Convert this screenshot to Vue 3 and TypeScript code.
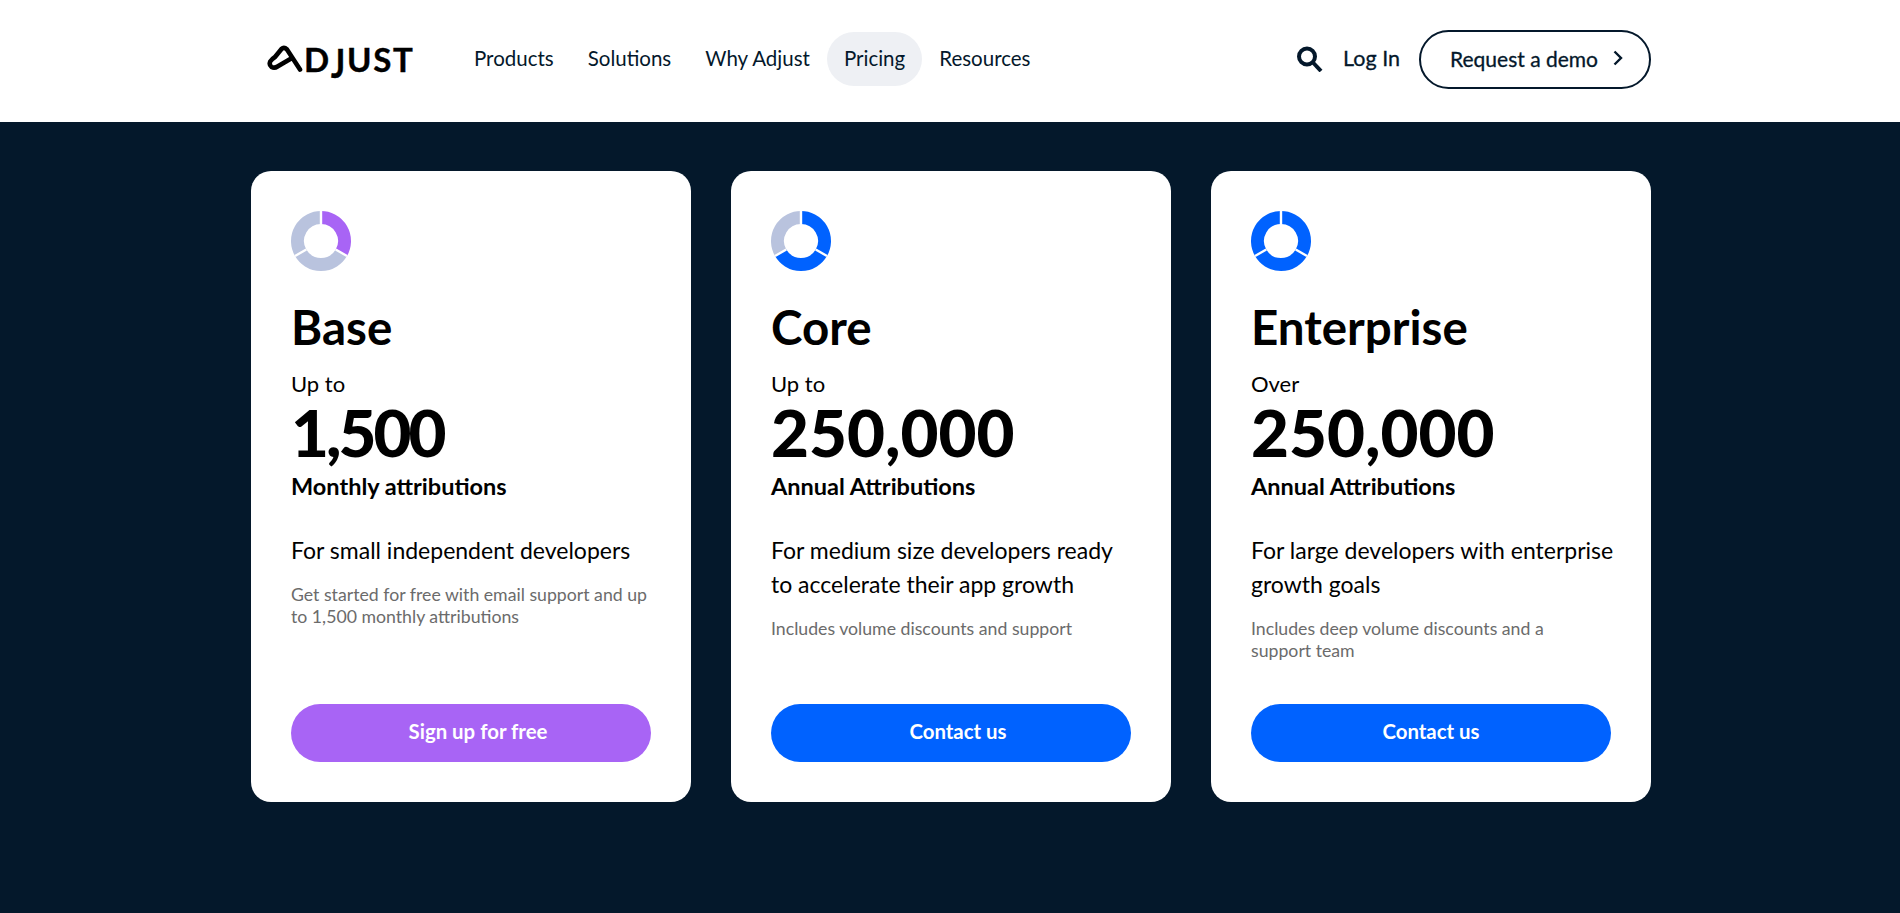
<script setup lang="ts">
interface Plan {
  name: string
  lead: string
  amount: string
  unit: string
  title: string
  note: string
  cta: string
  colors: string[]
  button: string
  centered?: boolean
  tight?: boolean
}

const navItems = ['Products', 'Solutions', 'Why Adjust', 'Pricing', 'Resources']

const blue = '#0062ff'
const purple = '#a864f5'
const grey = '#b9c3de'

const plans: Plan[] = [
  {
    name: 'Base',
    lead: 'Up to',
    amount: '1,500',
    unit: 'Monthly attributions',
    title: 'For small independent developers',
    note: 'Get started for free with email support and up to 1,500 monthly attributions',
    cta: 'Sign up for free',
    colors: [purple, grey, grey],
    button: purple,
    tight: true,
  },
  {
    name: 'Core',
    lead: 'Up to',
    amount: '250,000',
    unit: 'Annual Attributions',
    title: 'For medium size developers ready to accelerate their app growth',
    note: 'Includes volume discounts and support',
    cta: 'Contact us',
    colors: [blue, blue, grey],
    button: blue,
  },
  {
    name: 'Enterprise',
    lead: 'Over',
    amount: '250,000',
    unit: 'Annual Attributions',
    title: 'For large developers with enterprise growth goals',
    note: 'Includes deep volume discounts and a support team',
    cta: 'Contact us',
    colors: [blue, blue, blue],
    button: blue,
    centered: true,
  },
]

// one third of the donut, angles measured clockwise from 12 o'clock
function arc(index: number): string {
  const r = 23.5
  const point = (deg: number) => {
    const rad = (deg * Math.PI) / 180
    return `${(30 + r * Math.sin(rad)).toFixed(2)} ${(30 - r * Math.cos(rad)).toFixed(2)}`
  }
  return `M${point(index * 120)} A${r} ${r} 0 0 1 ${point((index + 1) * 120)}`
}
</script>

<template>
  <div class="page">
    <header class="header">
      <div class="wrap header-row">
        <a class="logo">
          <svg class="logo-a" viewBox="0 0 36 28" width="36" height="28">
            <path d="M33 24.500 L20 4.500 Q17 1.500 14.500 4 L8 12 Q5 14 3.200 16.500 Q1.800 20 4.500 22 Q7.500 23.500 10.500 21.500 L25 13" fill="none" stroke="#000" stroke-width="4.600" stroke-linecap="round" stroke-linejoin="round" />
          </svg>
          <span>D<span class="logo-j">J</span>UST</span>
        </a>
        <nav class="nav">
          <a v-for="item in navItems" :key="item" class="nav-item" :class="{ active: item === 'Pricing' }">{{ item }}</a>
        </nav>
        <div class="actions">
          <svg class="search" viewBox="0 0 26 26" width="26" height="26">
            <circle cx="10" cy="10.500" r="8" fill="none" stroke="#04182b" stroke-width="4" />
            <path d="M15.500 16 L24 25" stroke="#04182b" stroke-width="4" />
          </svg>
          <a class="login">Log In</a>
          <a class="demo">
            Request a demo
            <svg viewBox="0 0 12 18" width="12" height="18">
              <path d="M2.500 2.500 L9 9 L2.500 15.500" fill="none" stroke="#04182b" stroke-width="2.400" />
            </svg>
          </a>
        </div>
      </div>
    </header>

    <main class="wrap cards">
      <section v-for="plan in plans" :key="plan.name" class="card">
        <svg class="ring" viewBox="0 0 60 60" width="60" height="60">
          <path v-for="(color, i) in plan.colors" :key="i" :d="arc(i)" fill="none" :stroke="color" stroke-width="13" />
          <path d="M30 0 V17 M56 45 L44.700 38.500 M4 45 L15.300 38.500" stroke="#fff" stroke-width="2.400" />
        </svg>
        <h2 class="name">{{ plan.name }}</h2>
        <p class="lead">{{ plan.lead }}</p>
        <p class="amount" :class="{ tight: plan.tight }">{{ plan.amount }}</p>
        <p class="unit">{{ plan.unit }}</p>
        <p class="title">{{ plan.title }}</p>
        <p class="note">{{ plan.note }}</p>
        <a class="cta" :class="{ centered: plan.centered }" :style="{ background: plan.button }">{{ plan.cta }}</a>
      </section>
    </main>
  </div>
</template>

<style>
body {
  background: #04182b;
}
</style>

<style scoped>
.page {
  min-height: 913px;
  background: #04182b;
  font-family: "Lato", "Liberation Sans", sans-serif;
  color: #000;
}

.wrap {
  width: 1400px;
  margin-left: 251px;
}

.header {
  height: 122px;
  background: #fff;
}

.header-row {
  display: flex;
  align-items: center;
  height: 118px;
}

.logo {
  display: flex;
  align-items: center;
  width: 190px;
  margin-left: 16px;
  font-size: 33px;
  font-weight: 700;
  letter-spacing: 1.800px;
  line-height: 1;
  -webkit-text-stroke: 0.4px #000;
}

.logo-a {
  margin-right: 1px;
}

.logo-j {
  display: inline-block;
  transform: scaleY(1.2);
  transform-origin: top;
}

.nav {
  display: flex;
  align-items: center;
}

.nav-item {
  padding: 0 17px;
  height: 54px;
  line-height: 52px;
  border-radius: 27px;
  font-size: 20.500px;
  color: #04182b;
}

.nav-item.active {
  background: #eef0f4;
}

.actions {
  display: flex;
  align-items: center;
  margin-left: auto;
}

.search {
  margin-right: 20px;
}

.login {
  padding-bottom: 2px;
  font-size: 21.500px;
  color: #04182b;
  margin-right: 19px;
  -webkit-text-stroke: 0.3px #04182b;
}

.demo {
  display: flex;
  align-items: center;
  justify-content: center;
  gap: 14px;
  box-sizing: border-box;
  width: 232px;
  height: 59px;
  padding: 0 0 2px 4px;
  border: 2px solid #04182b;
  border-radius: 30px;
  font-size: 21px;
  color: #04182b;
  -webkit-text-stroke: 0.3px #04182b;
}

.cards {
  display: grid;
  grid-template-columns: repeat(3, 440px);
  gap: 40px;
  padding-top: 49px;
}

.card {
  display: flex;
  flex-direction: column;
  box-sizing: border-box;
  height: 631px;
  padding: 40px;
  background: #fff;
  border-radius: 20px;
}

.ring {
  display: block;
}

.name {
  margin: 29px 0 0;
  font-size: 47.500px;
  font-weight: 700;
  line-height: 54px;
}

.lead {
  margin: 17px 0 0;
  font-size: 22px;
  line-height: 26px;
}

.amount {
  margin: 0;
  font-size: 65.500px;
  font-weight: 900;
  line-height: 70px;
}

.amount.tight {
  letter-spacing: -3px;
}

.unit {
  margin: 2px 0 0;
  font-size: 23.500px;
  font-weight: 700;
  line-height: 34px;
}

.title {
  margin: 30px -4px 0 0;
  font-size: 23px;
  line-height: 34px;
}

.note {
  max-width: 357px;
  margin: 17px 0 0;
  font-size: 17.700px;
  line-height: 22px;
  color: #6b6b6b;
}

.cta {
  display: flex;
  align-items: center;
  justify-content: center;
  box-sizing: border-box;
  height: 58px;
  margin-top: auto;
  padding: 0 0 5px 14px;
  border-radius: 29px;
  font-size: 20.400px;
  font-weight: 700;
  color: #fff;
}

.cta.centered {
  padding-left: 0;
}
</style>
